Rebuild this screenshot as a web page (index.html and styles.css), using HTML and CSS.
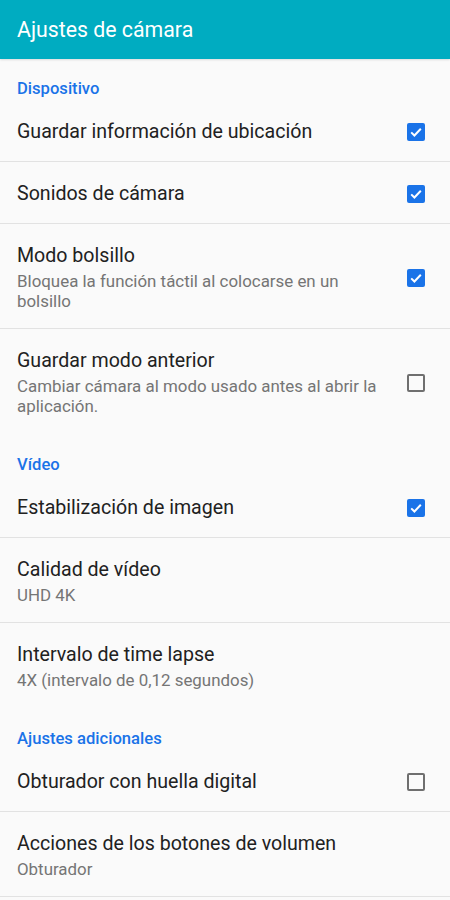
FILE: index.html
```html
<!DOCTYPE html>
<html lang="es">
<head>
    <meta charset="UTF-8">
    <meta name="viewport" content="width=device-width, initial-scale=1.0">
    <title>Ajustes de cámara</title>
    <link rel="stylesheet" href="styles.css">
</head>
<body>
    <header class="appbar">Ajustes de cámara</header>

    <main class="settings">
        <div class="category">Dispositivo</div>
        <div class="item">
            <div class="text">
                <div class="title">Guardar información de ubicación</div>
            </div>
            <span class="check on"><svg viewBox="0 0 18 18"><rect x="0" y="0" width="18" height="18" rx="2"/><polyline points="4.2,9.4 7.4,12.5 13.8,5.8"/></svg></span>
        </div>
        <div class="item">
            <div class="text">
                <div class="title">Sonidos de cámara</div>
            </div>
            <span class="check on"><svg viewBox="0 0 18 18"><rect x="0" y="0" width="18" height="18" rx="2"/><polyline points="4.2,9.4 7.4,12.5 13.8,5.8"/></svg></span>
        </div>
        <div class="item">
            <div class="text">
                <div class="title">Modo bolsillo</div>
                <div class="summary">Bloquea la función táctil al colocarse en un bolsillo</div>
            </div>
            <span class="check on"><svg viewBox="0 0 18 18"><rect x="0" y="0" width="18" height="18" rx="2"/><polyline points="4.2,9.4 7.4,12.5 13.8,5.8"/></svg></span>
        </div>
        <div class="item last">
            <div class="text">
                <div class="title">Guardar modo anterior</div>
                <div class="summary">Cambiar cámara al modo usado antes al abrir la aplicación.</div>
            </div>
            <span class="check"></span>
        </div>

        <div class="category">Vídeo</div>
        <div class="item">
            <div class="text">
                <div class="title">Estabilización de imagen</div>
            </div>
            <span class="check on"><svg viewBox="0 0 18 18"><rect x="0" y="0" width="18" height="18" rx="2"/><polyline points="4.2,9.4 7.4,12.5 13.8,5.8"/></svg></span>
        </div>
        <div class="item">
            <div class="text">
                <div class="title">Calidad de vídeo</div>
                <div class="summary">UHD 4K</div>
            </div>
        </div>
        <div class="item last">
            <div class="text">
                <div class="title">Intervalo de time lapse</div>
                <div class="summary">4X (intervalo de 0,12 segundos)</div>
            </div>
        </div>

        <div class="category">Ajustes adicionales</div>
        <div class="item">
            <div class="text">
                <div class="title">Obturador con huella digital</div>
            </div>
            <span class="check"></span>
        </div>
        <div class="item">
            <div class="text">
                <div class="title">Acciones de los botones de volumen</div>
                <div class="summary">Obturador</div>
            </div>
        </div>
    </main>
</body>
</html>
```

FILE: styles.css
```css
body {
    margin: 0;
    background: #fafafa;
    font-family: Roboto, "Noto Sans", sans-serif;
    overflow: hidden;
}

.appbar {
    height: 59px;
    padding: 0 17px;
    display: flex;
    align-items: center;
    background: #00acc1;
    color: #fff;
    font-size: 21.3px;
    box-shadow: 0 1px 2px rgba(0, 0, 0, 0.12);
    position: relative;
}

.category {
    padding: 21px 17px 2px;
    line-height: 19px;
    font-size: 16.6px;
    font-weight: 500;
    color: #1a73e8;
}

.category:first-child {
    padding-top: 20px;
}

.item {
    display: flex;
    align-items: center;
    gap: 21px;
    padding: 20px 25px 17px 17px;
    border-bottom: 1px solid #e2e2e2;
}

.item.last {
    border-bottom: none;
    padding-bottom: 18px;
}

.text {
    flex: 1;
}

.title {
    font-size: 19.6px;
    line-height: 24px;
    color: #212121;
}

.summary {
    margin-top: 3px;
    font-size: 16.9px;
    line-height: 20px;
    color: #757575;
}

/* Checkboxes */
.check {
    width: 18px;
    height: 18px;
    flex: none;
    box-sizing: border-box;
    border: 2px solid #6f6f6f;
    border-radius: 2px;
}

.check.on {
    border: none;
}

.check svg {
    display: block;
    width: 18px;
    height: 18px;
}

.check rect {
    fill: #1a73e8;
}

.check polyline {
    fill: none;
    stroke: #fff;
    stroke-width: 2;
}
```
